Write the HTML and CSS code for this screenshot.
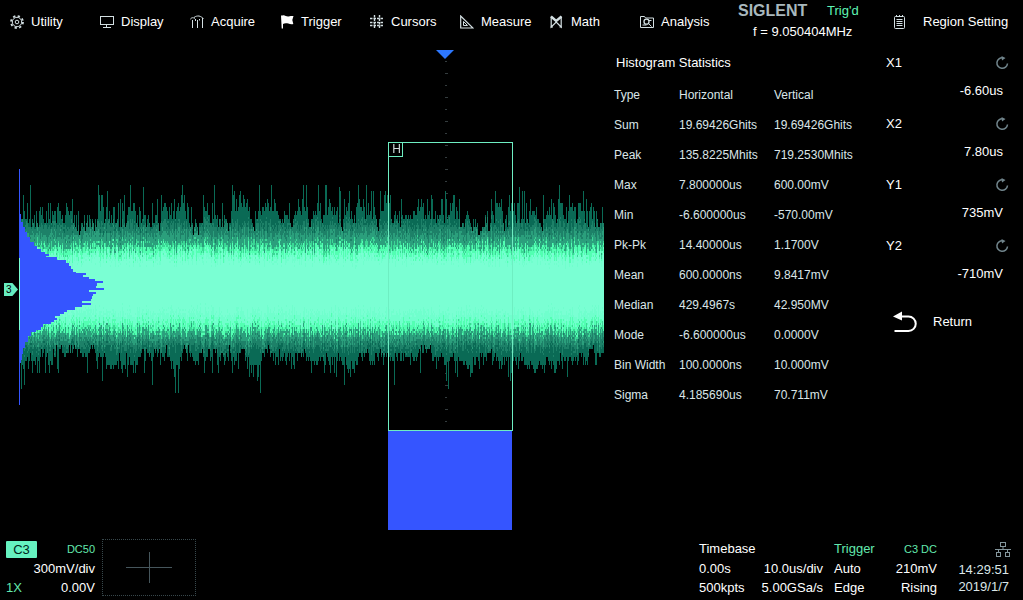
FILE: index.html
```html
<!DOCTYPE html>
<html lang="en">

<head>
  <meta charset="utf-8">
  <title>Oscilloscope</title>
  <link rel="stylesheet" href="styles.css">
</head>

<body>
  <!-- Top menu -->
  <header class="topbar">
    <nav class="menu">
      <button type="button" class="menu-item">
        <svg class="icon" viewBox="0 0 14 14"><circle cx="7" cy="7" r="4.700"/><circle cx="7" cy="7" r="1.800"/><circle cx="7" cy="7" r="6" stroke-width="1.800" stroke-dasharray="2.300 2.410"/></svg>
        Utility
      </button>
      <button type="button" class="menu-item">
        <svg class="icon" viewBox="0 0 14 14"><rect x="0.5" y="1.5" width="13" height="8"/><path d="M6.5 10v2M3 12.5h8"/></svg>
        Display
      </button>
      <button type="button" class="menu-item">
        <svg class="icon" viewBox="0 0 14 14"><path d="M0 4.500C2 2 3 2.500 5 3.500M4 2.500C6 1 7 1 9 1C11 1.500 12 2.500 13.500 3.500"/><path d="M2.500 5v8M7.500 5v8M12.500 3v10"/><path d="M5.500 4v2M9.500 4v1.500"/></svg>
        Acquire
      </button>
      <button type="button" class="menu-item">
        <svg class="icon" viewBox="0 0 14 14"><path class="solid" d="M1 0.500h1.500c2-1 4 1.500 6 1c1.500-.5 3-.5 5-.5l-1.200 4l1 4c-2 .5-3.500 0-5-.5c-2-.5-4-.5-5.300.5v4.500h-1.300z"/></svg>
        Trigger
      </button>
      <button type="button" class="menu-item">
        <svg class="icon" viewBox="0 0 14 14"><path d="M4.500 0v14M9.500 0v14" stroke-width="1.400" stroke-dasharray="2.500 1"/><path d="M0 3.500h14M0 7.500h14M0 10.500h14" stroke-width="1.400" stroke-dasharray="2.500 1"/></svg>
        Cursors
      </button>
      <button type="button" class="menu-item">
        <svg class="icon" viewBox="0 0 14 14"><path d="M0.700 1v12h12.300z" stroke-width="1.200"/><path d="M3.500 6.500v4h4z"/></svg>
        Measure
      </button>
      <button type="button" class="menu-item">
        <svg class="icon" viewBox="0 0 14 14"><path d="M1.200 1.500v10.500l5-5l5 5v-10.500" stroke-width="1.200"/><path d="M1 1.500l5.200 4.500l5.300-4.500" stroke-width="2.400"/><path d="M0.500 12h2.500M9.500 12h2.500"/></svg>
        Math
      </button>
      <button type="button" class="menu-item">
        <svg class="icon" viewBox="0 0 14 14"><path d="M0.500 12.500v-11h4l1 1.500h8v9.500z"/><circle cx="6.500" cy="6.700" r="2.500" stroke-width="1.300"/><path d="M8.500 8.500l3 3M2.500 10h4M9 5.500h2.500"/></svg>
        Analysis
      </button>
    </nav>
    <div class="brand">
      <span class="logo">SIGLENT</span>
      <span class="state">Trig'd</span>
      <span class="freq">f = 9.050404MHz</span>
    </div>
    <button type="button" class="side-title">
      <svg class="icon" viewBox="0 0 14 14"><rect x="1.500" y="1.500" width="10" height="12" rx="1"/><path d="M3.500 0v2M6.500 0v2M9.500 0v2M3.500 4.500h6M3.500 6.500h6M3.500 8.500h6M3.500 10.500h6"/></svg>
      Region Setting
    </button>
  </header>

  <main class="main">
    <!-- Waveform screen -->
    <section class="screen">
      <canvas class="wave" id="wave"></canvas>
      <svg class="trigger-mark" viewBox="0 0 18 9"><path d="M0 0h18l-9 9z"/></svg>
      <div class="channel-mark">3</div>
      <div class="zone"><span class="zone-tag">H</span></div>
      <div class="zone-hist"></div>
    </section>

    <!-- Statistics -->
    <section class="stats">
      <h2>Histogram Statistics</h2>
      <table>
        <thead>
          <tr><th>Type</th><th>Horizontal</th><th>Vertical</th></tr>
        </thead>
        <tbody>
          <tr><td>Sum</td><td>19.69426Ghits</td><td>19.69426Ghits</td></tr>
          <tr><td>Peak</td><td>135.8225Mhits</td><td>719.2530Mhits</td></tr>
          <tr><td>Max</td><td>7.800000us</td><td>600.00mV</td></tr>
          <tr><td>Min</td><td>-6.600000us</td><td>-570.00mV</td></tr>
          <tr><td>Pk-Pk</td><td>14.40000us</td><td>1.1700V</td></tr>
          <tr><td>Mean</td><td>600.0000ns</td><td>9.8417mV</td></tr>
          <tr><td>Median</td><td>429.4967s</td><td>42.950MV</td></tr>
          <tr><td>Mode</td><td>-6.600000us</td><td>0.0000V</td></tr>
          <tr><td>Bin Width</td><td>100.0000ns</td><td>10.000mV</td></tr>
          <tr><td>Sigma</td><td>4.185690us</td><td>70.711mV</td></tr>
        </tbody>
      </table>
    </section>

    <!-- Region settings -->
    <aside class="side">
      <button type="button" class="param">
        <span>X1</span>
        <svg class="knob" viewBox="0 0 14 14"><path d="M8 1.800A5.300 5.300 0 1 0 12.500 7.500"/><path class="tip" d="M6.500 0l4 2l-3.500 2.500z"/></svg>
        <span class="param-value">-6.60us</span>
      </button>
      <button type="button" class="param">
        <span>X2</span>
        <svg class="knob" viewBox="0 0 14 14"><path d="M8 1.800A5.300 5.300 0 1 0 12.500 7.500"/><path class="tip" d="M6.500 0l4 2l-3.500 2.500z"/></svg>
        <span class="param-value">7.80us</span>
      </button>
      <button type="button" class="param">
        <span>Y1</span>
        <svg class="knob" viewBox="0 0 14 14"><path d="M8 1.800A5.300 5.300 0 1 0 12.500 7.500"/><path class="tip" d="M6.500 0l4 2l-3.500 2.500z"/></svg>
        <span class="param-value">735mV</span>
      </button>
      <button type="button" class="param">
        <span>Y2</span>
        <svg class="knob" viewBox="0 0 14 14"><path d="M8 1.800A5.300 5.300 0 1 0 12.500 7.500"/><path class="tip" d="M6.500 0l4 2l-3.500 2.500z"/></svg>
        <span class="param-value">-710mV</span>
      </button>
      <button type="button" class="return">
        <svg class="return-icon" viewBox="0 0 24 22"><path d="M8 5.500h7.500a6.500 6.500 0 0 1 0 14.500h-14"/><path class="tip" d="M0 5.500l9-5v9z"/></svg>
        Return
      </button>
    </aside>
  </main>

  <!-- Status bar -->
  <footer class="status">
    <div class="box channel">
      <span class="badge">C3</span><span class="small green end">DC50</span>
      <span class="end wide">300mV/div</span>
      <span class="green">1X</span><span class="end">0.00V</span>
    </div>
    <button type="button" class="add" aria-label="Add channel">
      <svg viewBox="0 0 46 32"><path d="M0 15.500h46M23.500 0v31"/></svg>
    </button>
    <div class="box timebase">
      <span class="wide">Timebase</span>
      <span>0.00s</span><span class="end">10.0us/div</span>
      <span>500kpts</span><span class="end">5.00GSa/s</span>
    </div>
    <div class="box trigger">
      <span class="green">Trigger</span><span class="small green end">C3 DC</span>
      <span>Auto</span><span class="end">210mV</span>
      <span>Edge</span><span class="end">Rising</span>
    </div>
    <div class="clock">
      <svg class="net" viewBox="0 0 18 17"><rect x="6.500" y="1.500" width="5" height="4"/><rect x="2.500" y="11.500" width="4" height="4"/><rect x="11.500" y="11.500" width="4" height="4"/><path d="M9 6v2.500M1 8.500h16M4.500 8.500v3M13.500 8.500v3"/></svg>
      <span>14:29:51</span>
      <span>2019/1/7</span>
    </div>
  </footer>

  <script src="script.js"></script>
</body>

</html>
```

FILE: styles.css
```css
* {
  box-sizing: border-box;
}

body {
  margin: 0;
  min-height: 100vh;
  display: flex;
  flex-direction: column;
  background-color: #000;
  color: #fff;
  font-family: "Liberation Sans", Arial, sans-serif;
  font-size: 13px;
  line-height: 18px;
}

button {
  margin: 0;
  padding: 0;
  border: none;
  background: none;
  color: inherit;
  font: inherit;
  text-align: left;
  cursor: pointer;
}

svg {
  display: block;
  fill: none;
}

/* Top menu */
.topbar {
  display: flex;
  height: 43px;
}

.menu {
  flex: 1;
  display: grid;
  grid-template-columns: repeat(8, 1fr);
  padding: 0 8px 0 10px;
}

.menu-item,
.side-title {
  display: flex;
  align-items: center;
  gap: 7px;
  white-space: nowrap;
}

.icon {
  flex: none;
  width: 14px;
  height: 14px;
  stroke: #d3dfe2;
}

.icon .solid {
  fill: #fff;
  stroke: none;
}

.brand {
  width: 155px;
  display: grid;
  grid-template-columns: 89px 1fr;
  grid-template-rows: 20px 20px;
  align-content: start;
  padding-top: 2px;
}

.logo {
  color: #a9b8bd;
  font-size: 16px;
  font-weight: bold;
}

.state {
  color: #5ff5b5;
}

.freq {
  grid-column: span 2;
  padding: 1px 0 0 15px;
}

.side-title {
  width: 130px;
  gap: 16px;
}

/* Middle part */
.main {
  flex: 1;
  display: flex;
}

.screen {
  position: relative;
  flex: 1;
  height: 490px;
}

.wave {
  display: block;
  width: 100%;
  height: 100%;
}

.trigger-mark {
  position: absolute;
  top: 7px;
  left: 436px;
  width: 18px;
  height: 9px;
  fill: #2d78ff;
}

.channel-mark {
  position: absolute;
  top: 240px;
  left: 4px;
  width: 14px;
  height: 13px;
  padding-left: 2px;
  background-color: #66edc0;
  clip-path: polygon(0 0, 60% 0, 100% 50%, 60% 100%, 0 100%);
  color: #000;
  font-size: 10px;
  line-height: 13px;
}

.zone {
  position: absolute;
  top: 99px;
  left: 388px;
  width: 125px;
  height: 289px;
  border: 1px solid #6eeec2;
}

.zone-tag {
  display: block;
  width: 14px;
  height: 14px;
  padding-left: 2px;
  border: solid #6eeec2;
  border-width: 0 1px 1px 0;
  color: #d0d8da;
  font-size: 12px;
  line-height: 13px;
  text-align: center;
}

.zone-hist {
  position: absolute;
  top: 388px;
  left: 388px;
  width: 124px;
  height: 99px;
  background-color: #3555ff;
}

/* Statistics table */
.stats {
  width: 272px;
  padding: 11px 0 0 10px;
}

.stats h2 {
  margin: 0;
  padding-left: 2px;
  font-size: 13px;
  font-weight: normal;
}

.stats table {
  width: 100%;
  margin-top: 8px;
  border-collapse: collapse;
  table-layout: fixed;
  color: #dbe6e8;
  font-size: 12px;
}

.stats th,
.stats td {
  height: 30px;
  padding: 0;
  font-weight: normal;
  text-align: left;
}

.stats th:nth-child(1) {
  width: 65px;
}

.stats th:nth-child(2) {
  width: 95px;
}

/* Region settings */
.side {
  width: 147px;
  padding: 11px 14px 0 10px;
}

.param {
  width: 100%;
  height: 61px;
  display: grid;
  grid-template-columns: 1fr 14px;
  align-content: start;
  align-items: center;
  row-gap: 10px;
}

.knob {
  width: 14px;
  height: 14px;
  stroke: #71858c;
  stroke-width: 1.5;
}

.knob .tip {
  fill: #71858c;
  stroke: none;
}

.param-value {
  grid-column: span 2;
  padding-right: 6px;
  text-align: right;
}

.return {
  width: 100%;
  display: flex;
  align-items: center;
  gap: 16px;
  padding: 13px 0 0 7px;
}

.return-icon {
  width: 24px;
  height: 22px;
  stroke: #fff;
  stroke-width: 2;
}

.return-icon .tip {
  fill: #fff;
  stroke: none;
}

/* Status bar */
.status {
  display: flex;
  height: 67px;
  padding-right: 14px;
}

.box {
  display: grid;
  grid-template-columns: auto auto;
  grid-template-rows: 20px 20px 17px;
  align-items: center;
  padding-top: 6px;
}

.wide {
  grid-column: span 2;
}

.end {
  text-align: right;
}

.green {
  color: #62e8ae;
}

.small {
  font-size: 11px;
}

.channel {
  width: 95px;
  padding-left: 6px;
}

.badge {
  width: 31px;
  height: 17px;
  border-radius: 1px;
  background-color: #66f2c0;
  color: #00251a;
  line-height: 17px;
  text-align: center;
}

.add {
  width: 94px;
  height: 57px;
  margin: 6px auto 0 7px;
  border: 1px dotted #38484c;
}

.add svg {
  width: 46px;
  height: 32px;
  margin: 0 auto;
  stroke: #46565c;
}

.timebase {
  width: 124px;
  margin-right: 11px;
}

.trigger {
  width: 103px;
  margin-right: 21px;
}

.clock {
  width: 51px;
  padding-top: 8px;
  line-height: 17px;
  text-align: right;
  white-space: nowrap;
  color: #dbe6e8;
}

.clock span {
  display: block;
}

.net {
  width: 18px;
  height: 17px;
  margin: 0 0 3px 36px;
  stroke: #84969c;
}
```

FILE: script.js
```js
const canvas = document.getElementById('wave');
const ctx = canvas.getContext('2d');

const START_X = 20;
const CENTER_Y = 246;

// Colour stops by distance from the centre line, above and below it
const COLORS = ['#7affd3', '#70ffcd', '#52ffb2', '#3bd795', '#2b9f7c', '#1d8168', '#0a6a55'];
const UPPER = [30, 35, 41, 45, 55, 65];
const LOWER = [23, 33, 39, 42, 50, 58];

// Vertical histogram: [y, right edge]
const HISTOGRAM = [
  [171, 21], [179, 23], [184, 25], [189, 27], [194, 30], [199, 34], [203, 37], [206, 41],
  [209, 45], [211, 49], [213, 46], [214, 57], [217, 66], [220, 69], [223, 71], [226, 73],
  [229, 76], [230, 86], [232, 83], [234, 89], [236, 95], [238, 103], [240, 97], [243, 96],
  [245, 104], [247, 89], [249, 96], [251, 93], [253, 92], [256, 91], [258, 82], [260, 91],
  [262, 82], [264, 75], [267, 67], [269, 64], [271, 60], [273, 55], [275, 57], [277, 54],
  [279, 51], [281, 43], [284, 41], [287, 36], [289, 31], [293, 28], [299, 25], [305, 23],
  [311, 22], [317, 21]
];

// Small seeded generator, so that the trace is the same on each load
let seed = 20190107;
function random() {
  seed = (seed * 1664525 + 1013904223) % 4294967296;
  return seed / 4294967296;
}

function pickColor(distance, stops) {
  let i = 0;
  while (i < stops.length && distance > stops[i]) i++;
  return COLORS[i];
}

function drawAxis() {
  ctx.fillStyle = '#343c3e';
  for (let y = 18; y < 385; y += 12) {
    const wide = (y - 18) % 24 === 0 ? 2 : 3;
    ctx.fillRect(445, y, wide, 1);
  }
}

// List of how far each column reaches: a slow swell, plus some long spikes
function makeReach(count, base, spread, limit) {
  const list = [];
  let swell = 0;
  for (let i = 0; i < count; i++) {
    swell = swell * 0.8 + (random() - 0.5) * spread;
    const spike = -Math.log(1 - random()) * spread * 0.6;
    const value = base + swell + spike;
    list.push(Math.min(limit, Math.round(value / 4) * 4));
  }
  return list;
}

function drawColumn(x, reach, direction, stops) {
  const shift = (random() - 0.5) * 11;
  for (let d = 0; d < reach; d += 2) {
    const noise = shift + (random() - 0.5) * 9;
    ctx.fillStyle = pickColor(d + noise, stops);
    ctx.fillRect(x, CENTER_Y + d * direction, 1, 2);
  }
}

function drawWave() {
  const count = canvas.width - START_X;
  const upper = makeReach(count, 71, 15, 106);
  const lower = makeReach(count, 64, 11, 104);
  for (let i = 0; i < count; i++) {
    drawColumn(START_X + i, upper[i], -1, UPPER);
    drawColumn(START_X + i, lower[i], 1, LOWER);
  }
}

function drawHistogram() {
  ctx.fillStyle = '#3555ff';
  ctx.fillRect(19, 126, 1, 236);
  HISTOGRAM.forEach(([y, right], i) => {
    const next = HISTOGRAM[i + 1] ? HISTOGRAM[i + 1][0] : y + 3;
    ctx.fillRect(START_X, y, right - START_X, next - y);
  });
  // Channel colour shows at the left edge of the trace
  ctx.fillStyle = '#7affd3';
  ctx.fillRect(19, 215, 1, 72);
}

function draw() {
  canvas.width = canvas.clientWidth;
  canvas.height = canvas.clientHeight;
  seed = 20190107;
  drawAxis();
  drawWave();
  drawHistogram();
}

window.addEventListener('resize', draw);
draw();
```
